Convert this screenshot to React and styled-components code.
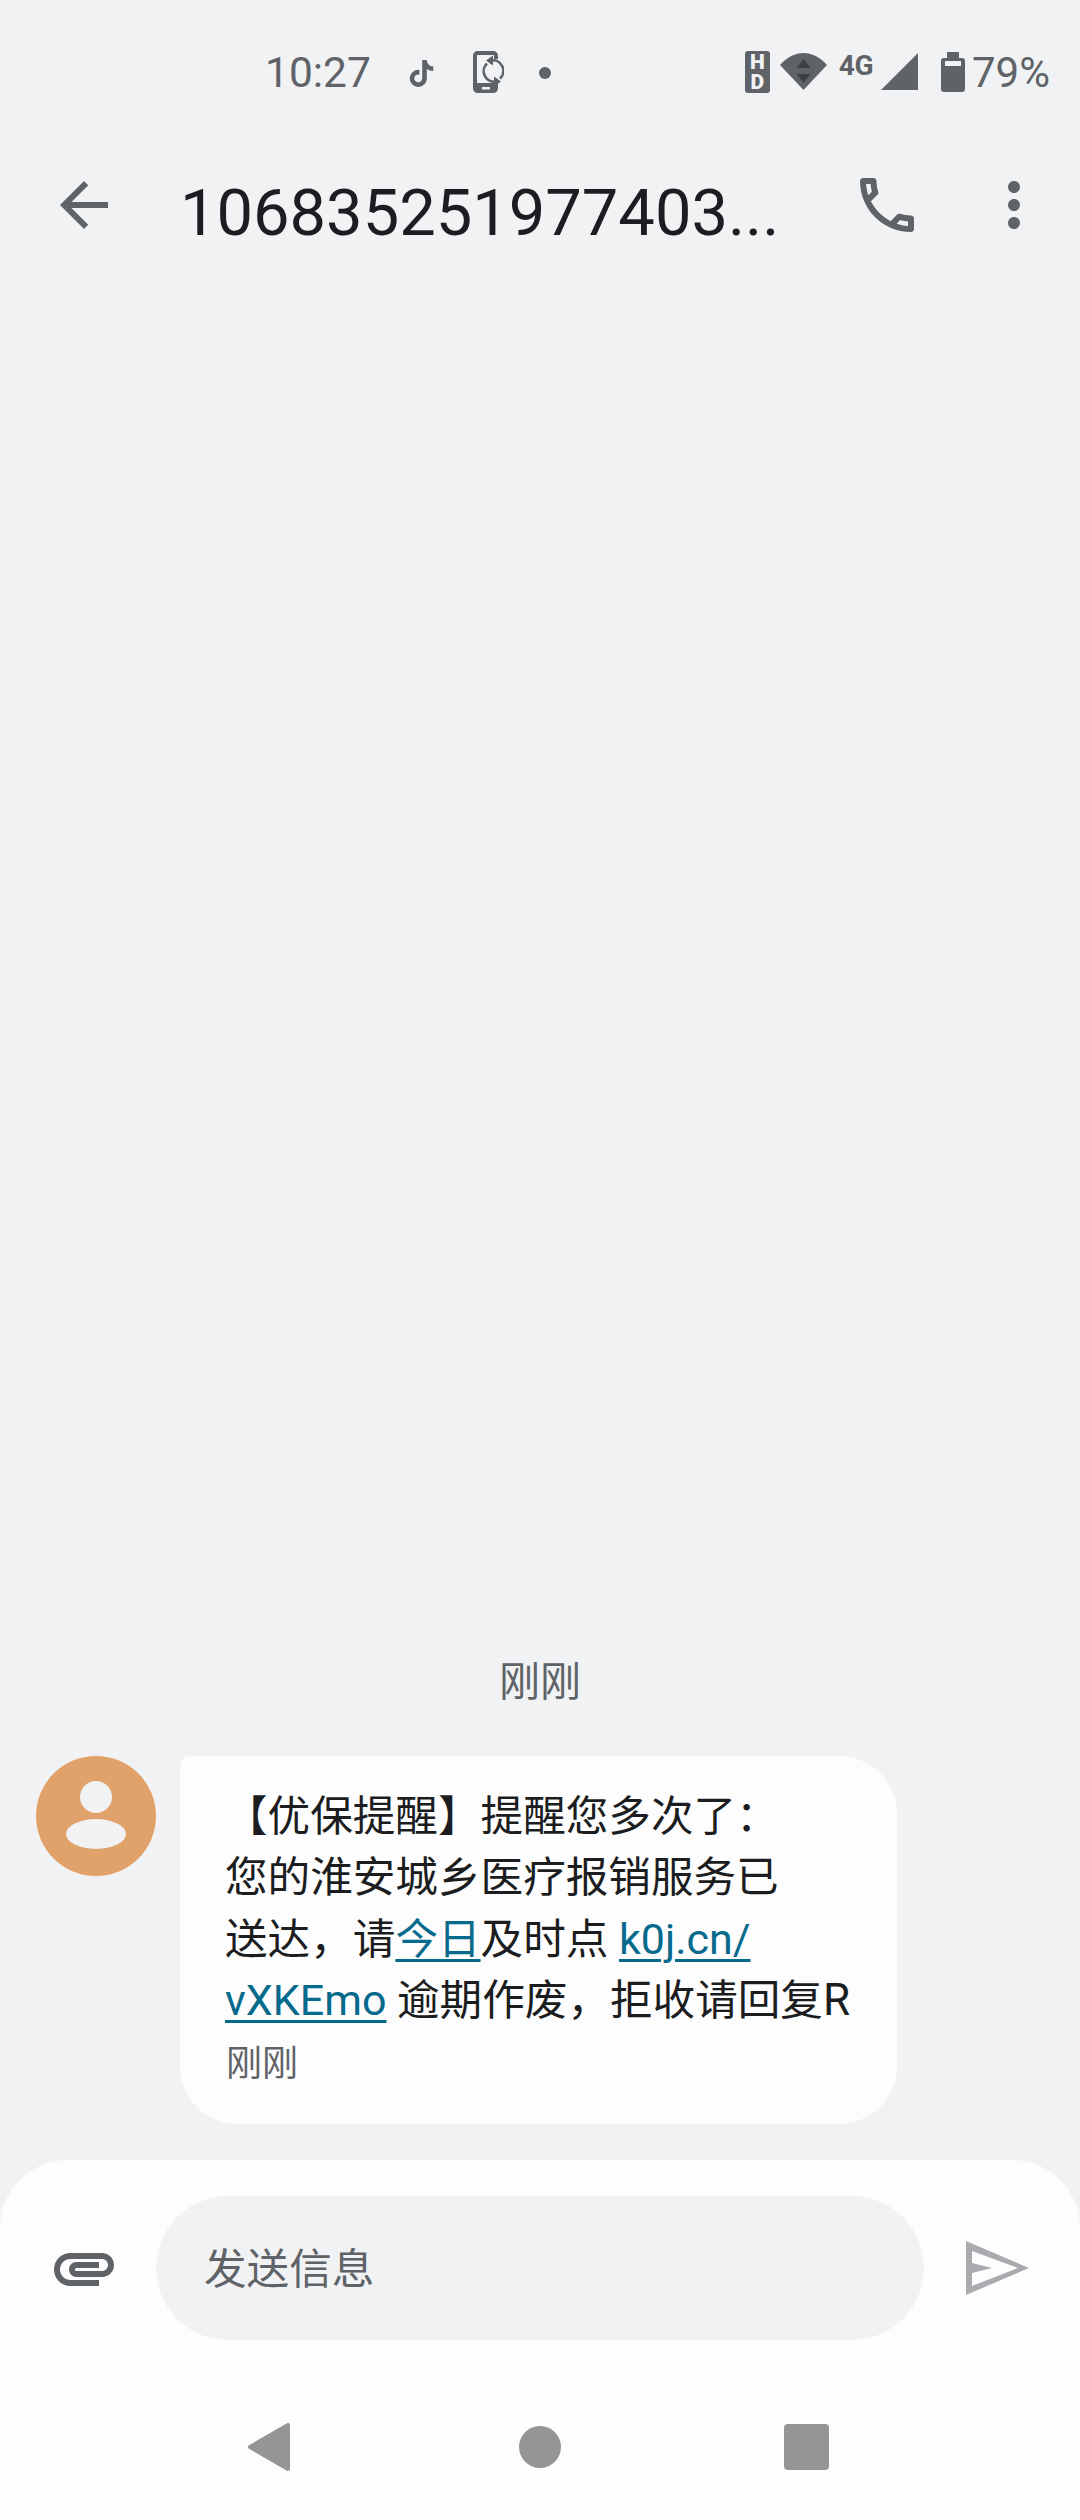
import React from 'react';
import styled, { createGlobalStyle } from 'styled-components';
import { FaTiktok } from 'react-icons/fa';

const GlobalStyle = createGlobalStyle`
  html, body {
    margin: 0;
    padding: 0;
    background: #f1f2f3;
    font-family: Roboto, "Noto Sans CJK SC", sans-serif;
  }
`;

const ICON = '#5f6368';

const Page = styled.div`
  width: 1080px;
  height: 2520px;
  display: flex;
  flex-direction: column;
  background: #f1f2f3;
  overflow: hidden;
`;

const StatusBar = styled.div`
  height: 146px;
  flex: none;
  display: flex;
  align-items: flex-start;
  padding: 50px 30px 0 265px;
  box-sizing: border-box;
  color: ${ICON};
`;

const Time = styled.div`
  font-size: 42.5px;
  line-height: 46px;
`;

const StatusItem = styled.div`
  flex: none;
  margin-left: ${(p) => p.$ml || 0}px;
  margin-top: ${(p) => p.$mt || 0}px;
  display: flex;
  line-height: 0;
`;

const RightIcons = styled.div`
  margin-left: auto;
  display: flex;
  align-items: flex-start;
`;

const HdBox = styled.div`
  width: 25px;
  height: 42px;
  border-radius: 3px;
  background: ${ICON};
  color: #f1f2f3;
  display: flex;
  flex-direction: column;
  align-items: center;
  font-size: 21px;
  font-weight: 900;
  line-height: 20px;
  padding-top: 1px;
  box-sizing: border-box;
`;

const NetLabel = styled.div`
  font-size: 28px;
  font-weight: 700;
  line-height: 24px;
  letter-spacing: -0.5px;
  color: ${ICON};
`;

const Percent = styled.div`
  font-size: 42px;
  line-height: 46px;
  margin-left: 7px;
`;

const Toolbar = styled.div`
  height: 118px;
  flex: none;
  display: flex;
  align-items: center;
  padding-left: 48px;
`;

const Title = styled.div`
  width: 640px;
  margin-left: 60px;
  margin-top: 16px;
  font-size: 65px;
  line-height: 72px;
  white-space: nowrap;
  color: #1b1d20;
`;

const IconButton = styled.div`
  flex: none;
  width: 72px;
  height: 72px;
  margin-left: ${(p) => p.$ml || 0}px;
`;

const Thread = styled.div`
  flex: 1;
  display: flex;
  flex-direction: column;
  justify-content: flex-end;
  padding: 0 0 36px 36px;
`;

const Stamp = styled.div`
  text-align: center;
  margin-right: 36px;
  font-size: 41px;
  line-height: 50px;
  color: ${ICON};
  margin-bottom: 49px;
`;

const MessageRow = styled.div`
  display: flex;
  align-items: flex-start;
  gap: 24px;
`;

const Avatar = styled.div`
  width: 120px;
  height: 120px;
  flex: none;
  border-radius: 50%;
  background: #e0a26a;
  line-height: 0;
`;

const Bubble = styled.div`
  width: 717px;
  box-sizing: border-box;
  background: #fdfdfe;
  border-radius: 10px 58px 58px 58px;
  padding: 30px 0 40px 45px;
`;

const Line = styled.div`
  font-size: 42.6px;
  line-height: 61.2px;
  color: #1b1d20;
  white-space: nowrap;
`;

const Link = styled.span`
  color: #056a8c;
  font-size: ${(p) => (p.$latin ? '43px' : 'inherit')};
  text-decoration: underline;
  text-underline-offset: 5px;
  text-decoration-thickness: 2.5px;
`;

const Latin = styled.span`
  font-size: 44px;
`;

const BubbleTime = styled.div`
  margin-top: 13px;
  margin-left: 1px;
  font-size: 36px;
  line-height: 40px;
  color: ${ICON};
`;

const Composer = styled.div`
  height: 360px;
  flex: none;
  background: #fdfdfe;
  border-radius: 68px 68px 0 0;
  display: flex;
  flex-direction: column;
`;

const InputRow = styled.div`
  display: flex;
  align-items: center;
  padding: 36px 0 0 48px;
`;

const InputField = styled.div`
  width: 768px;
  height: 144px;
  margin-left: 36px;
  margin-right: 42px;
  padding: 0 0 5px 48px;
  box-sizing: border-box;
  display: flex;
  align-items: center;
  border-radius: 72px;
  background: #f1f2f3;
  font-size: 42.6px;
  color: ${ICON};
`;

const NavBar = styled.div`
  margin-top: 83px;
  display: flex;
  align-items: center;
  padding-left: 248px;
`;

const NavBack = styled.div`
  width: 42px;
  height: 48px;
  line-height: 0;
`;

const NavHome = styled.div`
  width: 42px;
  height: 42px;
  margin-left: 229px;
  border-radius: 50%;
  background: #959595;
`;

const NavRecent = styled.div`
  width: 45px;
  height: 46px;
  margin-left: 223px;
  border-radius: 4px;
  background: #959595;
`;

function SyncPhoneIcon() {
  return (
    <svg width="32" height="42" viewBox="0 0 32 42">
      <path
        fill={ICON}
        fillRule="evenodd"
        d="M6 0h15c3 0 5 2 5 5v3h-4V4H5v28h21v5c0 3-2 5-5 5H6c-3 0-5-2-5-5V5c0-3 2-5 5-5zM10 36v2.5h8V36z"
      />
      <g fill="none" stroke={ICON} strokeWidth="2.6">
        <path d="M19 9.5a10.5 10.5 0 0 1 9 18" />
        <path d="M24 30.5a10.5 10.5 0 0 1-9-18" />
      </g>
      <path fill={ICON} d="M14 9.5l7-5v10zM29 30.5l-7 5v-10z" />
    </svg>
  );
}

function WifiIcon() {
  return (
    <svg width="47" height="37" viewBox="0 0 47 37">
      <path fill={ICON} d="M0 12C14 -4 33 -4 47 12L23.5 37z" />
      <path fill="#3e4043" d="M23.5 6l7 9h-14zM23.5 30l-7-9h14z" />
    </svg>
  );
}

function SignalIcon() {
  return (
    <svg width="37" height="37" viewBox="0 0 37 37">
      <path fill={ICON} d="M37 0v37H0z" />
    </svg>
  );
}

function BatteryIcon() {
  return (
    <svg width="24" height="40" viewBox="0 0 24 40">
      <path
        fill={ICON}
        d="M6 0h12v6h3c2 0 3 1 3 3v28c0 2-1 3-3 3H3c-2 0-3-1-3-3V9c0-2 1-3 3-3h3z"
      />
      <rect x="4" y="9" width="16" height="5" fill="#f1f2f3" />
    </svg>
  );
}

function SendIcon() {
  return (
    <svg width="64" height="54" viewBox="0 0 64 54">
      <path
        fill="#aaabae"
        fillRule="evenodd"
        d="M0 0L63 27L0 54zM6 10V22L26 27L6 32V45L52 27z"
      />
    </svg>
  );
}

function MaterialIcon({ d, fill = ICON, size = 72 }) {
  return (
    <svg width={size} height={size} viewBox="0 0 24 24">
      <path fill={fill} d={d} />
    </svg>
  );
}

const BACK =
  'M20 11H7.83l5.59-5.59L12 4l-8 8 8 8 1.41-1.41L7.83 13H20v-2z';
const CALL =
  'M6.54 5c.06.89.21 1.76.45 2.59l-1.2 1.2c-.41-1.2-.67-2.47-.76-3.79h1.51m9.86 12.02c.85.24 1.72.39 2.6.45v1.49c-1.32-.09-2.59-.35-3.8-.75l1.2-1.19M7.5 3H4c-.55 0-1 .45-1 1 0 9.39 7.61 17 17 17 .55 0 1-.45 1-1v-3.49c0-.55-.45-1-1-1-1.24 0-2.45-.2-3.57-.57-.1-.04-.21-.05-.31-.05-.26 0-.51.1-.71.29l-2.2 2.2c-2.83-1.45-5.15-3.76-6.59-6.59l2.2-2.2c.28-.28.36-.67.25-1.02C8.7 6.45 8.5 5.25 8.5 4c0-.55-.45-1-1-1z';
const MORE =
  'M12 8c1.1 0 2-.9 2-2s-.9-2-2-2-2 .9-2 2 .9 2 2 2zm0 2c-1.1 0-2 .9-2 2s.9 2 2 2 2-.9 2-2-.9-2-2-2zm0 6c-1.1 0-2 .9-2 2s.9 2 2 2 2-.9 2-2-.9-2-2-2z';
const ATTACH =
  'M2 12.5C2 9.46 4.46 7 7.5 7H18c2.21 0 4 1.79 4 4s-1.79 4-4 4H9.5C8.12 15 7 13.88 7 12.5S8.12 10 9.5 10H17v2H9.41c-.55 0-.55 1 0 1H18c1.1 0 2-.9 2-2s-.9-2-2-2H7.5C5.57 9 4 10.57 4 12.5S5.57 16 7.5 16H17v2H7.5C4.46 18 2 15.54 2 12.5z';

export default function App() {
  return (
    <Page>
      <GlobalStyle />
      <StatusBar>
        <Time>10:27</Time>
        <StatusItem $ml={37} $mt={10}>
          <FaTiktok size={27} color={ICON} />
        </StatusItem>
        <StatusItem $ml={37} $mt={1}>
          <SyncPhoneIcon />
        </StatusItem>
        <StatusItem $ml={35} $mt={17}>
          <svg width="12" height="12" viewBox="0 0 12 12">
            <circle cx="6" cy="6" r="6" fill={ICON} />
          </svg>
        </StatusItem>
        <RightIcons>
          <StatusItem $mt={1}>
            <HdBox>
              <span>H</span>
              <span>D</span>
            </HdBox>
          </StatusItem>
          <StatusItem $ml={10} $mt={3}>
            <WifiIcon />
          </StatusItem>
          <StatusItem $ml={12} $mt={4}>
            <NetLabel>4G</NetLabel>
          </StatusItem>
          <StatusItem $ml={8} $mt={3}>
            <SignalIcon />
          </StatusItem>
          <StatusItem $ml={23} $mt={2}>
            <BatteryIcon />
          </StatusItem>
          <Percent>79%</Percent>
        </RightIcons>
      </StatusBar>

      <Toolbar>
        <IconButton>
          <MaterialIcon d={BACK} />
        </IconButton>
        <Title>106835251977403...</Title>
        <IconButton $ml={31}>
          <MaterialIcon d={CALL} />
        </IconButton>
        <IconButton $ml={55}>
          <MaterialIcon d={MORE} />
        </IconButton>
      </Toolbar>

      <Thread>
        <Stamp>刚刚</Stamp>
        <MessageRow>
          <Avatar>
            <svg width="120" height="120" viewBox="0 0 120 120">
              <circle cx="60" cy="41" r="16" fill="#f1f2f3" />
              <ellipse cx="60" cy="78" rx="30" ry="15" fill="#f1f2f3" />
            </svg>
          </Avatar>
          <Bubble>
            <Line>【优保提醒】提醒您多次了：</Line>
            <Line>您的淮安城乡医疗报销服务已</Line>
            <Line>
              送达，请<Link>今日</Link>及时点 <Link $latin>k0j.cn/</Link>
            </Line>
            <Line>
              <Link $latin>vXKEmo</Link> 逾期作废，拒收请回复<Latin>R</Latin>
            </Line>
            <BubbleTime>刚刚</BubbleTime>
          </Bubble>
        </MessageRow>
      </Thread>

      <Composer>
        <InputRow>
          <MaterialIcon d={ATTACH} />
          <InputField>发送信息</InputField>
          <SendIcon />
        </InputRow>
        <NavBar>
          <NavBack>
            <svg width="42" height="48" viewBox="0 0 42 48">
              <path
                fill="#959595"
                stroke="#959595"
                strokeWidth="4"
                strokeLinejoin="round"
                d="M40 2v44L2 24z"
              />
            </svg>
          </NavBack>
          <NavHome />
          <NavRecent />
        </NavBar>
      </Composer>
    </Page>
  );
}
